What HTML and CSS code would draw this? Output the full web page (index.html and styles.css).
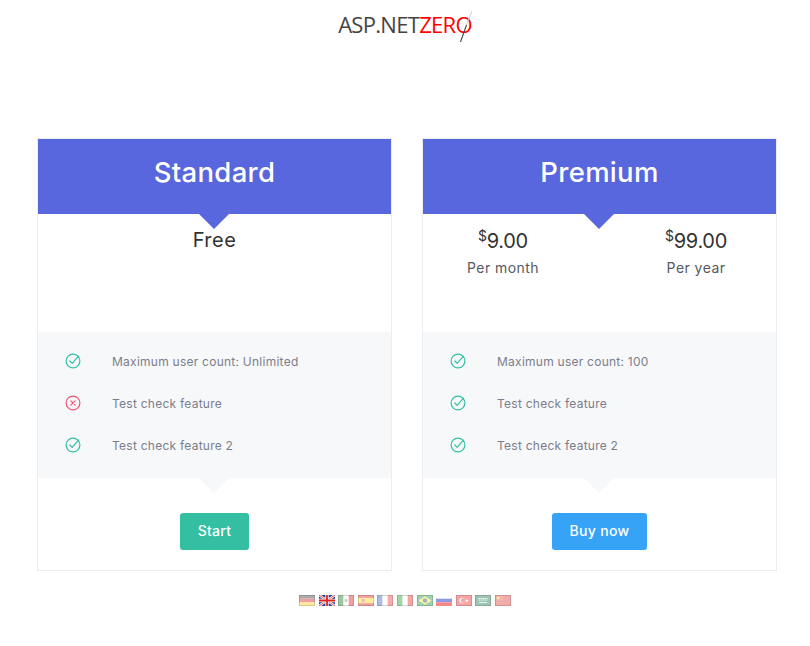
FILE: index.html
```html
<!DOCTYPE html>
<html><head>
<meta charset="utf-8">
<title>Pricing</title>
<link rel="stylesheet" href="styles.css">
</head>
<body>
  <header class="logo-bar">
    <div class="logo">ASP.NET<span class="logo-zero">ZERO</span>
      <svg class="logo-slash" width="14" height="34" viewBox="0 0 14 34"><path d="M13 1 L7.5 15" stroke="#d0d0d0" stroke-width="1"/><path d="M7.5 15 L1.5 32" stroke="#444" stroke-width="1.1"/></svg>
    </div>
  </header>

  <div class="plans">
    <section class="plan">
      <div class="plan-head">Standard</div>
      <div class="plan-price">
        <div class="price-free">Free</div>
      </div>
      <ul class="features">
        <li><svg class="ficon" width="16" height="16" viewBox="0 0 16 16"><use href="#ic-ok"/></svg><span>Maximum user count: Unlimited</span></li>
        <li><svg class="ficon" width="16" height="16" viewBox="0 0 16 16"><use href="#ic-no"/></svg><span>Test check feature</span></li>
        <li><svg class="ficon" width="16" height="16" viewBox="0 0 16 16"><use href="#ic-ok"/></svg><span>Test check feature 2</span></li>
      </ul>
      <div class="plan-foot"><a class="btn btn-green">Start</a></div>
    </section>

    <section class="plan">
      <div class="plan-head">Premium</div>
      <div class="plan-price two">
        <div class="price-col">
          <div class="amount"><sup>$</sup>9.00</div>
          <div class="period">Per month</div>
        </div>
        <div class="price-col">
          <div class="amount"><sup>$</sup>99.00</div>
          <div class="period">Per year</div>
        </div>
      </div>
      <ul class="features">
        <li><svg class="ficon" width="16" height="16" viewBox="0 0 16 16"><use href="#ic-ok"/></svg><span>Maximum user count: 100</span></li>
        <li><svg class="ficon" width="16" height="16" viewBox="0 0 16 16"><use href="#ic-ok"/></svg><span>Test check feature</span></li>
        <li><svg class="ficon" width="16" height="16" viewBox="0 0 16 16"><use href="#ic-ok"/></svg><span>Test check feature 2</span></li>
      </ul>
      <div class="plan-foot"><a class="btn btn-blue">Buy now</a></div>
    </section>
  </div>

  <footer class="langs">
    <svg class="flag" viewBox="0 0 16 11"><rect width="16" height="3.7" fill="#222"/><rect y="3.7" width="16" height="3.6" fill="#d00"/><rect y="7.3" width="16" height="3.7" fill="#fc0"/><use href="#flag-edge"/></svg>
    <svg class="flag full" viewBox="0 0 16 11"><rect width="16" height="11" fill="#1f3a93"/><path d="M0 0 16 11M16 0 0 11" stroke="#fff" stroke-width="2.4"/><path d="M0 0 16 11M16 0 0 11" stroke="#d22" stroke-width=".8"/><path d="M8 0V11M0 5.5H16" stroke="#fff" stroke-width="3.4"/><path d="M8 0V11M0 5.5H16" stroke="#d22" stroke-width="1.8"/></svg>
    <svg class="flag" viewBox="0 0 16 11"><rect width="16" height="11" fill="#fff"/><rect width="5.3" height="11" fill="#060"/><rect x="10.7" width="5.3" height="11" fill="#d00"/><circle cx="8" cy="5.5" r="1.4" fill="#674"/><use href="#flag-edge"/></svg>
    <svg class="flag" viewBox="0 0 16 11"><rect width="16" height="11" fill="#d00"/><rect y="2.8" width="16" height="5.4" fill="#fc0"/><rect x="4" y="4" width="2.4" height="3" fill="#b44"/><use href="#flag-edge"/></svg>
    <svg class="flag" viewBox="0 0 16 11"><rect width="16" height="11" fill="#fff"/><rect width="5.3" height="11" fill="#2a4fb0"/><rect x="10.7" width="5.3" height="11" fill="#e22"/><use href="#flag-edge"/></svg>
    <svg class="flag" viewBox="0 0 16 11"><rect width="16" height="11" fill="#fff"/><rect width="5.3" height="11" fill="#090"/><rect x="10.7" width="5.3" height="11" fill="#e11"/><use href="#flag-edge"/></svg>
    <svg class="flag" viewBox="0 0 16 11"><rect width="16" height="11" fill="#083"/><path d="M8 1.2 14.5 5.5 8 9.8 1.5 5.5Z" fill="#fe0"/><circle cx="8" cy="5.5" r="2.3" fill="#137"/><use href="#flag-edge"/></svg>
    <svg class="flag" viewBox="0 0 16 11"><rect width="16" height="3.7" fill="#fff"/><rect y="3.7" width="16" height="3.6" fill="#23c"/><rect y="7.3" width="16" height="3.7" fill="#e11"/></svg>
    <svg class="flag" viewBox="0 0 16 11"><rect width="16" height="11" fill="#e11"/><circle cx="6.2" cy="5.5" r="2.8" fill="#fff"/><circle cx="7" cy="5.5" r="2.2" fill="#e11"/><path d="M10.8 3.8l.5 1.2 1.2.1-.9.8.3 1.3-1.1-.7-1.1.7.3-1.3-.9-.8 1.2-.1Z" fill="#fff"/><use href="#flag-edge"/></svg>
    <svg class="flag" viewBox="0 0 16 11"><rect width="16" height="11" fill="#063"/><path d="M3.5 3.5H12.5M3.5 5H12.5" stroke="#fff" stroke-width=".9" stroke-dasharray="1.4 .6"/><path d="M4 7.5H12" stroke="#fff" stroke-width=".8"/><use href="#flag-edge"/></svg>
    <svg class="flag" viewBox="0 0 16 11"><rect width="16" height="11" fill="#d22"/><circle cx="3.2" cy="3" r="1.5" fill="#fd0"/><circle cx="6.2" cy="1.5" r=".5" fill="#fd0"/><circle cx="7" cy="3" r=".5" fill="#fd0"/><circle cx="6.2" cy="4.6" r=".5" fill="#fd0"/><use href="#flag-edge"/></svg>
  </footer>

  <svg class="icon-defs" width="0" height="0">
    <defs>
      <rect id="flag-edge" x=".5" y=".5" width="15" height="10" fill="#fff" fill-opacity=".25" stroke="#000" stroke-opacity=".3"/>
      <g id="ic-ok" fill="none" stroke="#34bfa3" stroke-width="1.2" stroke-linecap="round" stroke-linejoin="round">
        <circle cx="8" cy="8" r="6.9"/>
        <path d="M4.8 8 7.2 10.4 13.4 3.2"/>
      </g>
      <g id="ic-no" fill="none" stroke="#f4516c" stroke-width="1.2" stroke-linecap="round">
        <circle cx="8" cy="8" r="6.9"/>
        <path d="M5.8 5.8 10.2 10.2M10.2 5.8 5.8 10.2"/>
      </g>
    </defs>
  </svg>
</body>
</html>
```

FILE: styles.css
```css
* {
  box-sizing: border-box;
}
body {
  margin: 0;
  background: #fff;
  font-family: "Inter", "Open Sans", sans-serif;
  color: #575962;
}
.logo-bar {
  height: 138px;
  display: flex;
  justify-content: center;
  padding: 10px 0 0 0;
}
.logo {
  position: relative;
  height: 28px;
  font-family: "Open Sans", sans-serif;
  font-size: 22px;
  line-height: 28px;
  letter-spacing: -0.7px;
  color: #444;
}
.logo-zero {
  color: #f00;
}
.logo-slash {
  position: absolute;
  right: -1px;
  top: 0;
}
.plans {
  display: flex;
  gap: 30px;
  padding: 0 33px 0 37px;
}
.plan {
  width: 355px;
  height: 433px;
  border: 1px solid #ebedf2;
  display: flex;
  flex-direction: column;
}
.plan-head {
  position: relative;
  height: 75px;
  background: #5867dd;
  color: #fff;
  font-size: 27.5px;
  font-weight: 500;
  letter-spacing: 0.3px;
  line-height: 67px;
  text-align: center;
}
.plan-head::after {
  content: "";
  position: absolute;
  left: 50%;
  bottom: -15px;
  margin-left: -15.5px;
  border-top: 15px solid #5867dd;
  border-left: 15px solid transparent;
  border-right: 15px solid transparent;
}
.plan-price {
  height: 118px;
  text-align: center;
  color: #333;
}
.price-free {
  font-size: 20px;
  letter-spacing: 0.5px;
  line-height: 28px;
  margin-top: 12px;
}
.plan-price.two {
  display: flex;
  justify-content: space-between;
  padding-top: 12px;
}
.price-col {
  width: 160px;
}
.amount {
  font-size: 20px;
  letter-spacing: -0.3px;
  line-height: 30px;
}
.amount sup {
  font-size: 14px;
  line-height: 0;
  vertical-align: 7px;
}
.period {
  margin-top: 2px;
  font-size: 14px;
  letter-spacing: 0.45px;
  line-height: 20px;
  color: #575962;
}
.features {
  margin: 0;
  padding: 8px 0 0 27px;
  height: 146px;
  list-style: none;
  background: #f7f8fa;
  position: relative;
}
.features::after {
  content: "";
  position: absolute;
  left: 50%;
  bottom: -15px;
  margin-left: -15.5px;
  border-top: 15px solid #f7f8fa;
  border-left: 15px solid transparent;
  border-right: 15px solid transparent;
}
.features li {
  height: 42px;
  display: flex;
  align-items: center;
  font-size: 12px;
  letter-spacing: 0.25px;
  color: #7b7e8a;
}
.ficon {
  width: 16px;
  height: 16px;
  margin-right: 31px;
}
.plan-foot {
  flex: 1;
  display: flex;
  justify-content: center;
  padding-top: 35px;
}
.btn {
  height: 37px;
  padding: 0 18px;
  border-radius: 3px;
  color: #fff;
  font-size: 14px;
  font-weight: 500;
  letter-spacing: 0.3px;
  line-height: 36px;
}
.btn-green {
  background: #34bfa3;
}
.btn-blue {
  background: #36a3f7;
}
.langs {
  display: flex;
  justify-content: center;
  gap: 3.6px;
  padding: 24px 0 0 0;
}
.flag {
  width: 16px;
  height: 11px;
  opacity: 0.5;
}
.flag.full {
  opacity: 1;
}
.icon-defs {
  position: absolute;
}
```
